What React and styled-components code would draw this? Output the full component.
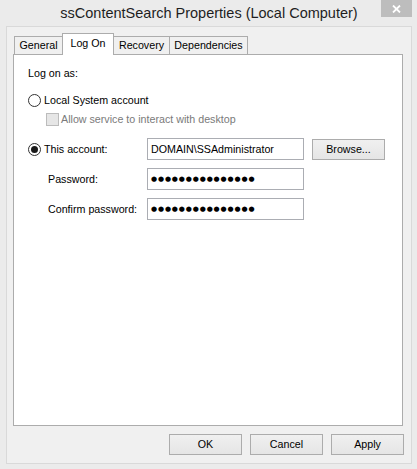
import React from 'react';
import styled, { createGlobalStyle } from 'styled-components';

const GlobalStyle = createGlobalStyle`
    html, body {
        margin: 0;
        padding: 0;
    }
    body {
        background: #ebebeb;
        font-family: "Liberation Sans", Arial, sans-serif;
        font-size: 10.7px;
        color: #000;
    }
`;

const Window = styled.div`
    width: 417px;
    height: 469px;
    box-sizing: border-box;
    padding: 0 5px 5px 6px;
    background: #ebebeb;
    display: flex;
    flex-direction: column;
`;

const TitleBar = styled.div`
    height: 26px;
    flex: 0 0 26px;
    display: grid;
    grid-template-columns: 1fr auto 1fr;
    align-items: start;
`;

const Title = styled.div`
    grid-column: 2;
    line-height: 26px;
    font-size: 14.5px;
    color: #1e1e1e;
    white-space: nowrap;
`;

const CloseButton = styled.div`
    grid-column: 3;
    justify-self: end;
    width: 31px;
    height: 17px;
    background: #bdbdbd;
    display: flex;
    align-items: center;
    justify-content: center;
`;

const Client = styled.div`
    flex: 1;
    box-sizing: border-box;
    border: 1px solid #d9d9d9;
    background: #f0f0f0;
    padding: 6px 8px 8px 6px;
    display: flex;
    flex-direction: column;
`;

const TabStrip = styled.div`
    height: 21px;
    flex: 0 0 21px;
    display: flex;
    align-items: flex-end;
    padding-left: 1px;
`;

const Tab = styled.div`
    box-sizing: border-box;
    width: ${p => p.$width}px;
    height: ${p => (p.$active ? 22 : 18)}px;
    margin-left: ${p => (p.$first ? 0 : -1)}px;
    margin-bottom: ${p => (p.$active ? -1 : 0)}px;
    padding-top: ${p => (p.$active ? 1 : 0)}px;
    border: 1px solid #acacac;
    border-bottom: none;
    background: ${p => (p.$active ? '#fff' : '#f0f0f0')};
    position: relative;
    z-index: ${p => (p.$active ? 2 : 1)};
    text-align: center;
    line-height: 17px;
    white-space: nowrap;
`;

const Panel = styled.div`
    flex: 1;
    box-sizing: border-box;
    border: 1px solid #acacac;
    background: #fff;
    padding: 11px 14px;
    display: flex;
    flex-direction: column;
`;

const Heading = styled.div`
    line-height: 14px;
`;

const OptionRow = styled.div`
    display: flex;
    align-items: center;
    gap: ${p => p.$gap || 3}px;
    margin-top: ${p => p.$top || 0}px;
    margin-left: ${p => p.$indent || 0}px;
    line-height: 14px;
    color: ${p => (p.$disabled ? '#7a7a7a' : '#000')};
    white-space: nowrap;
`;

const Radio = styled.span`
    box-sizing: border-box;
    width: 13px;
    height: 13px;
    flex: 0 0 13px;
    border: 1px solid #333;
    border-radius: 50%;
    background: #fff;
    display: flex;
    align-items: center;
    justify-content: center;
    &::after {
        content: '';
        display: ${p => (p.$checked ? 'block' : 'none')};
        width: 7px;
        height: 7px;
        border-radius: 50%;
        background: #1a1a1a;
    }
`;

const CheckBox = styled.span`
    box-sizing: border-box;
    width: 13px;
    height: 13px;
    flex: 0 0 13px;
    border: 1px solid #bcbcbc;
    background: #e6e6e6;
`;

const AccountGrid = styled.div`
    display: grid;
    grid-template-columns: 119px 157px auto;
    grid-auto-rows: 22px;
    row-gap: 8px;
    margin-top: 12px;
    align-items: center;
`;

const FieldLabel = styled.div`
    padding-left: ${p => p.$indent || 0}px;
    white-space: nowrap;
`;

const TextField = styled.div`
    box-sizing: border-box;
    height: 22px;
    border: 1px solid #abadb3;
    padding: 0 3px;
    line-height: 20px;
    white-space: nowrap;
    overflow: hidden;
`;

const Dots = styled.span`
    font-family: "DejaVu Sans", sans-serif;
    font-size: 7px;
    letter-spacing: 0.85px;
    line-height: 20px;
    vertical-align: top;
`;

const Button = styled.div`
    box-sizing: border-box;
    width: 73px;
    height: 21px;
    margin-left: ${p => p.$left || 0}px;
    border: 1px solid #acacac;
    background: linear-gradient(#f0f0f0, #e5e5e5);
    text-align: center;
    line-height: 19px;
`;

const ButtonRow = styled.div`
    display: flex;
    justify-content: flex-end;
    gap: 8px;
    margin-top: 8px;
    margin-right: -1px;
`;

const tabs = [
    { label: 'General', width: 49 },
    { label: 'Log On', width: 52, active: true },
    { label: 'Recovery', width: 57 },
    { label: 'Dependencies', width: 79 },
];

const PASSWORD = '●'.repeat(15);

const App = () => {
    return (
        <>
            <GlobalStyle />
            <Window>
                <TitleBar>
                    <Title>ssContentSearch Properties (Local Computer)</Title>
                    <CloseButton>
                        <svg width="9" height="8" viewBox="0 0 9 8">
                            <path d="M1 0.5 L8 7.5 M8 0.5 L1 7.5" stroke="#fff" strokeWidth="1.8" />
                        </svg>
                    </CloseButton>
                </TitleBar>
                <Client>
                    <TabStrip>
                        {tabs.map((t, i) => (
                            <Tab key={t.label} $width={t.width} $active={t.active} $first={i === 0}>
                                {t.label}
                            </Tab>
                        ))}
                    </TabStrip>
                    <Panel>
                        <Heading>Log on as:</Heading>
                        <OptionRow $top={13}>
                            <Radio />
                            Local System account
                        </OptionRow>
                        <OptionRow $top={5} $indent={18} $gap={2} $disabled>
                            <CheckBox />
                            Allow service to interact with desktop
                        </OptionRow>
                        <AccountGrid>
                            <OptionRow>
                                <Radio $checked />
                                This account:
                            </OptionRow>
                            <TextField>DOMAIN\SSAdministrator</TextField>
                            <Button $left={8}>Browse...</Button>

                            <FieldLabel $indent={20}>Password:</FieldLabel>
                            <TextField><Dots>{PASSWORD}</Dots></TextField>
                            <div />

                            <FieldLabel $indent={20}>Confirm password:</FieldLabel>
                            <TextField><Dots>{PASSWORD}</Dots></TextField>
                            <div />
                        </AccountGrid>
                    </Panel>
                    <ButtonRow>
                        <Button>OK</Button>
                        <Button>Cancel</Button>
                        <Button>Apply</Button>
                    </ButtonRow>
                </Client>
            </Window>
        </>
    );
};

export default App;
